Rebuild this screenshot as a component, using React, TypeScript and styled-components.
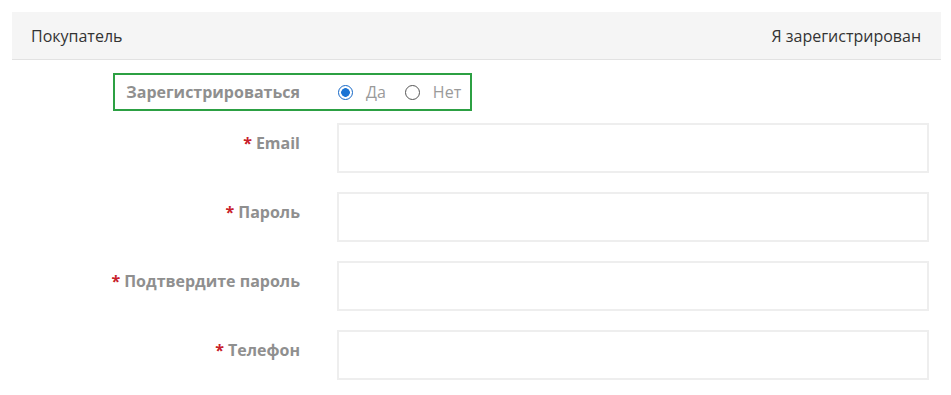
import React from "react";
import styled, { createGlobalStyle } from "styled-components";

const GlobalStyle = createGlobalStyle`
  body {
    margin: 0;
    background: #ffffff;
    font-family: "Open Sans", "Liberation Sans", sans-serif;
  }
`;

const Page = styled.div`
  padding: 12px 10px 0 12px;
`;

const Header = styled.div`
  display: flex;
  justify-content: space-between;
  align-items: center;
  height: 47px;
  padding: 0 20px 0 19px;
  background: #f5f5f5;
  border-bottom: 1px solid #e2e2e2;
  font-size: 16px;
  color: #333333;
`;

const Highlight = styled.div`
  display: flex;
  align-items: center;
  width: 355px;
  height: 34px;
  margin: 13px 0 0 101px;
  border: 2px solid #2ca043;
`;

const HighlightLabel = styled.span`
  flex-shrink: 0;
  width: 185px;
  text-align: right;
  font-size: 16px;
  font-weight: 700;
  color: #8f8f8f;
`;

const RadioGroup = styled.div`
  display: flex;
  align-items: center;
  gap: 19px;
  margin-left: 38px;
  flex-shrink: 0;
`;

const RadioOption = styled.label`
  display: flex;
  align-items: center;
  font-size: 16px;
  color: #9a9a9a;
`;

const RadioDot = styled.span<{ $checked?: boolean }>`
  box-sizing: border-box;
  width: 15px;
  height: 15px;
  margin-right: 13px;
  border-radius: 50%;
  border: ${p => (p.$checked ? "1px solid #1467c6" : "1.5px solid #555555")};
  background: ${p =>
    p.$checked
      ? "radial-gradient(circle, #1b74d4 0 4px, #ffffff 4.6px)"
      : "#ffffff"};
`;

const Fields = styled.div`
  display: flex;
  flex-direction: column;
  gap: 19px;
  margin-top: 12px;
`;

const Row = styled.div`
  display: grid;
  grid-template-columns: 288px 592px;
  column-gap: 37px;
`;

const Label = styled.div`
  padding-top: 9px;
  text-align: right;
  font-size: 16px;
  line-height: 22px;
  font-weight: 700;
  color: #8f8f8f;
`;

const Required = styled.span`
  color: #c8202a;
  margin-right: 4px;
`;

const Input = styled.input`
  box-sizing: border-box;
  height: 50px;
  width: 100%;
  border: 2px solid #eeeeee;
  background: #ffffff;
  outline: none;
`;

const fields = [
  { label: "Email", type: "email" },
  { label: "Пароль", type: "password" },
  { label: "Подтвердите пароль", type: "password" },
  { label: "Телефон", type: "tel" },
];

export default function App() {
  return (
    <Page>
      <GlobalStyle />
      <Header>
        <span>Покупатель</span>
        <span>Я зарегистрирован</span>
      </Header>
      <Highlight>
        <HighlightLabel>Зарегистрироваться</HighlightLabel>
        <RadioGroup>
          <RadioOption>
            <RadioDot $checked />
            Да
          </RadioOption>
          <RadioOption>
            <RadioDot />
            Нет
          </RadioOption>
        </RadioGroup>
      </Highlight>
      <Fields>
        {fields.map(f => (
          <Row key={f.label}>
            <Label>
              <Required>*</Required>
              {f.label}
            </Label>
            <Input type={f.type} />
          </Row>
        ))}
      </Fields>
    </Page>
  );
}
